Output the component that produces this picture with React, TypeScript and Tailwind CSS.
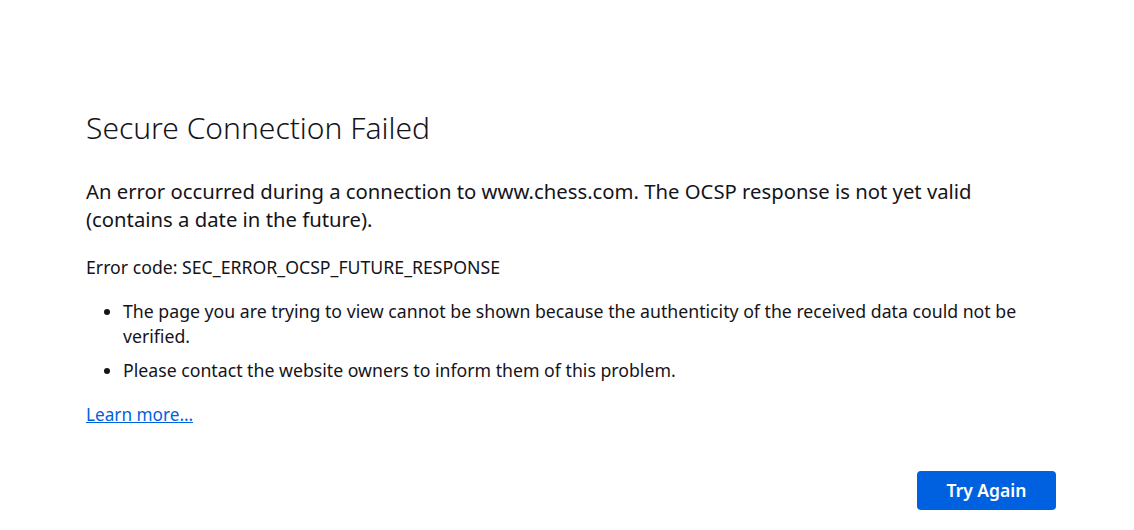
export default function App() {
  return (
    <div className="min-h-[530px] w-full bg-white text-[#15141a]" style={{ fontFamily: '"Noto Sans", "Open Sans", sans-serif' }}>
      <div className="ml-[86px] w-[970px] pt-[108px]">
        <h1 className="text-[30px] font-light leading-[40px]">Secure Connection Failed</h1>
        <p className="mt-[29px] text-[20.3px] leading-[28px]">
          An error occurred during a connection to www.chess.com. The OCSP response is not yet valid
          <br />
          (contains a date in the future).
        </p>
        <p className="mt-[23px] text-[17.7px] leading-[22px]">Error code: SEC_ERROR_OCSP_FUTURE_RESPONSE</p>
        <ul className="mt-[21px] list-disc pl-[37px] text-[17.7px] leading-[25px]">
          <li>The page you are trying to view cannot be shown because the authenticity of the received data could not be verified.</li>
          <li className="mt-[9px]">Please contact the website owners to inform them of this problem.</li>
        </ul>
        <a href="#" className="mt-[21px] block w-fit text-[17.2px] leading-[22px] text-[#0061e0] underline">Learn more…</a>
        <div className="mt-[45px] flex justify-end">
          <button className="h-[39px] w-[139px] rounded-[4px] bg-[#0061e0] text-[17.5px] font-semibold text-white">Try Again</button>
        </div>
      </div>
    </div>
  );
}
